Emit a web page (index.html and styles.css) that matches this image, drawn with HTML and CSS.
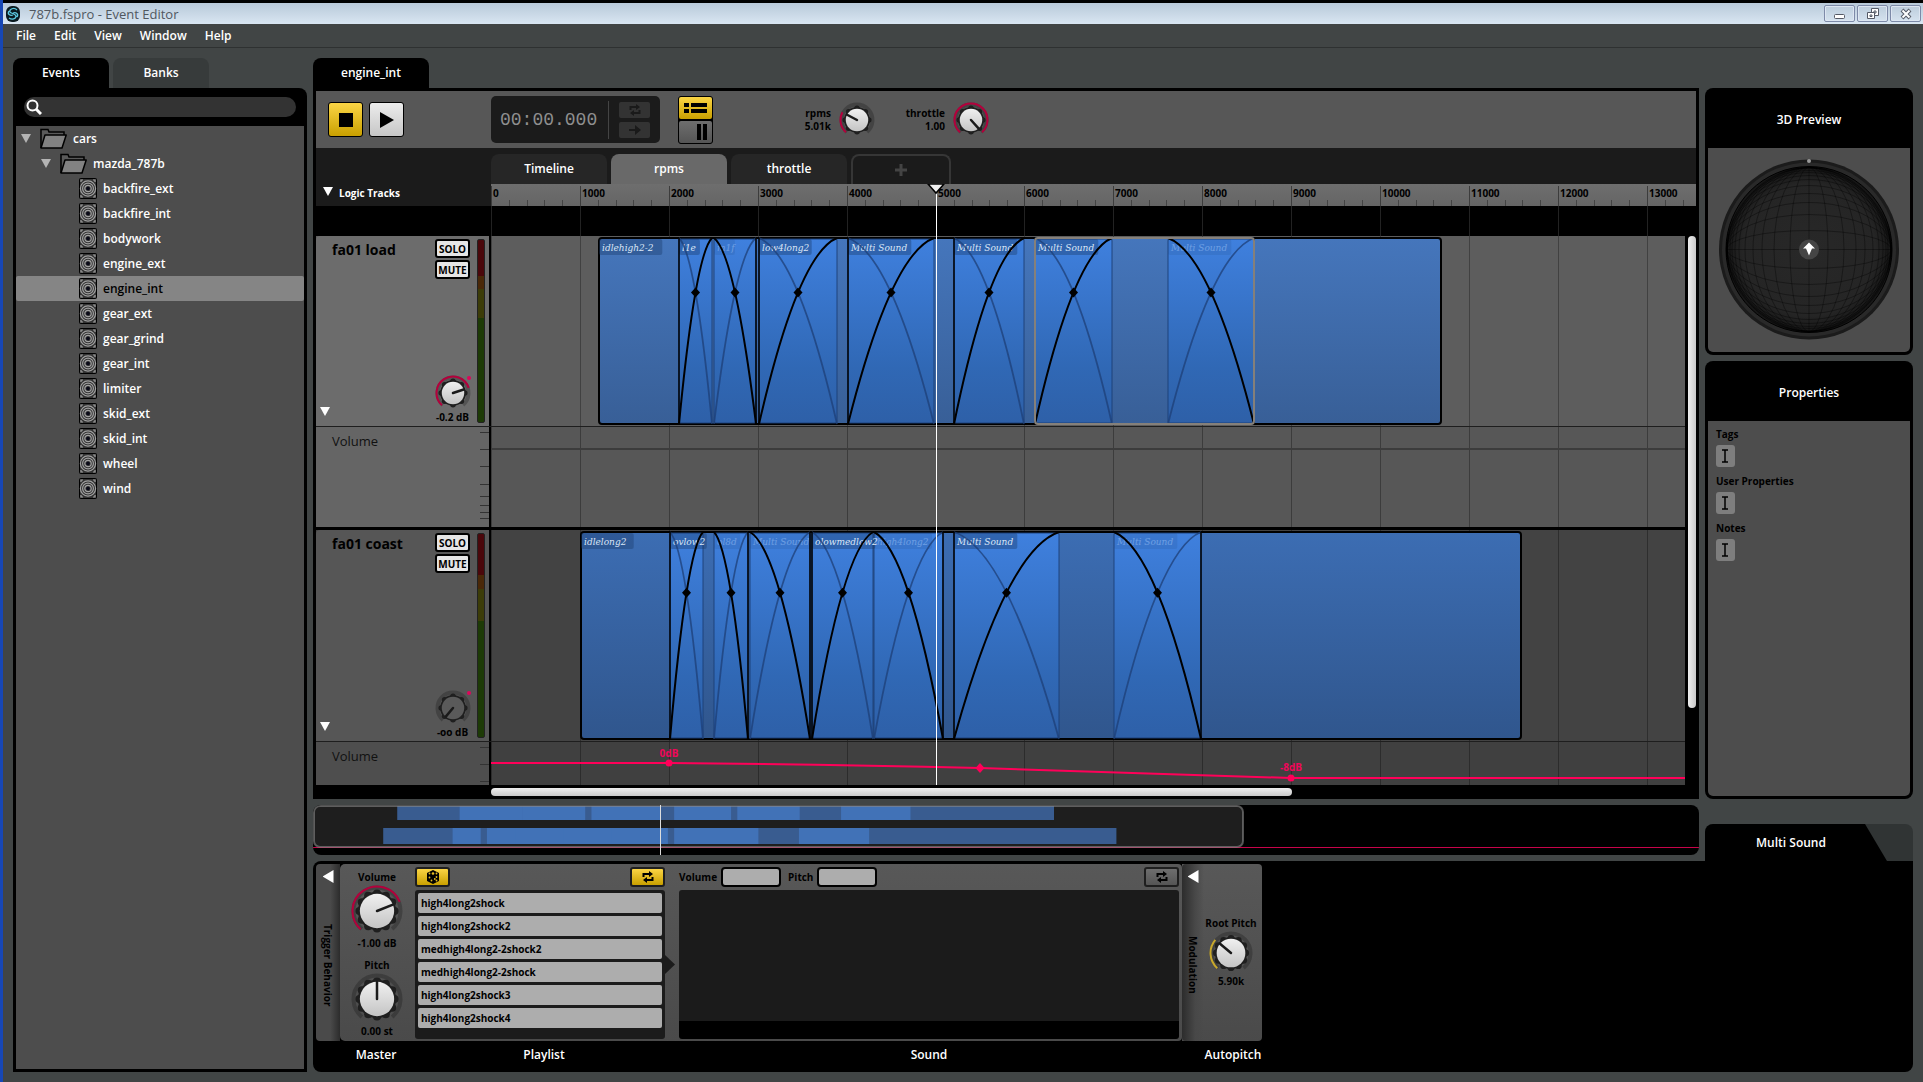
FILE: index.html
```html
<!DOCTYPE html>
<html lang="en">
<head>
<meta charset="UTF-8">
<meta name="viewport" content="width=device-width, initial-scale=1.0">
<title>787b.fspro - Event Editor</title>
<link rel="stylesheet" href="styles.css">
</head>
<body>
<svg class="defs" aria-hidden="true">
  <defs>
    <linearGradient id="faceFill" x1="0" y1="0" x2="0" y2="1">
      <stop offset="0" stop-color="#f0f0f0"/><stop offset="1" stop-color="#c4c4c4"/>
    </linearGradient>
    <linearGradient id="baseFill" x1="0" y1="0" x2="0" y2="1">
      <stop offset="0" stop-color="#4576bc"/><stop offset="1" stop-color="#385f97"/>
    </linearGradient>
    <linearGradient id="baseFillDark" x1="0" y1="0" x2="0" y2="1">
      <stop offset="0" stop-color="#3c6db3"/><stop offset="1" stop-color="#30568d"/>
    </linearGradient>
    <linearGradient id="fadeFill" x1="0" y1="0" x2="0" y2="1">
      <stop offset="0" stop-color="#3f80de"/><stop offset="0.7" stop-color="#3068b5"/><stop offset="1" stop-color="#2e60a8"/>
    </linearGradient>
    <radialGradient id="ballFill">
      <stop offset="0" stop-color="#282828"/><stop offset="0.8" stop-color="#252525"/><stop offset="1" stop-color="#161616"/>
    </radialGradient>
  </defs>
  <symbol id="folder" viewBox="0 0 27 21">
    <path d="M1 20V1.500H8L9 4H24V8" fill="#5a5a5a" stroke="#000" stroke-width="1.500"/>
    <path d="M1 20L5 7H26.200L22 20Z" fill="#828282" stroke="#000" stroke-width="1.500" stroke-linejoin="round"/>
  </symbol>
  <symbol id="event" viewBox="0 0 18 21">
    <rect x="0.500" y="0.500" width="17" height="20" rx="1" fill="#333" stroke="#000"/>
    <g fill="none" stroke="#a0a0a0" stroke-width="1.200">
      <circle cx="9" cy="10.500" r="7.600"/><circle cx="9" cy="10.500" r="5.400"/><circle cx="9" cy="10.500" r="3.200"/>
      <path d="M2 4V2H4M14 2H16V4M2 17V19H4M14 19H16V17"/>
    </g>
    <circle cx="9" cy="10.500" r="1.800" fill="#0a0a18"/>
  </symbol>
  <symbol id="loop" viewBox="0 0 14 12">
    <path d="M2.500 6V3H9M11.500 6V9H5" fill="none" stroke="currentColor" stroke-width="2"/>
    <path d="M8 0L12 3L8 6ZM6 6L2 9L6 12Z" fill="currentColor"/>
  </symbol>
</svg>

<header class="titlebar">
  <svg class="app-icon" width="14" height="16" viewBox="0 0 14 16">
    <rect width="14" height="16" rx="6" fill="#0a1a20"/>
    <path d="M11 4C8 1 3 3 4 6C5 8 9 7 10 10C10 13 6 14 3 12M3 5C1 8 4 10 7 9M11 11C13 8 10 6 7 7" fill="none" stroke="#5cc9e0" stroke-width="1.300"/>
  </svg>
  <h1>787b.fspro - Event Editor</h1>
  <div class="window-buttons">
    <button aria-label="Minimize"><svg width="12" height="12"><rect x="0.500" y="6.500" width="10" height="4" rx="1" fill="#fff" stroke="#555a66"/></svg></button>
    <button aria-label="Restore"><svg width="12" height="12"><path d="M4.500 0.500H11.500V7.500H4.500ZM7 3H9V5H7Z" fill="#fff" stroke="#555a66"/><path d="M0.500 4.500H7.500V10.500H0.500ZM3 7H5V8.500H3Z" fill="#fff" stroke="#555a66"/></svg></button>
    <button aria-label="Close"><svg width="12" height="12"><path d="M2 2L10 10M10 2L2 10" stroke="#555a66" stroke-width="4"/><path d="M2.500 2.500L9.500 9.500M9.500 2.500L2.500 9.500" stroke="#fff" stroke-width="2"/></svg></button>
  </div>
</header>

<nav class="menu">
  <a href="#">File</a>
  <a href="#">Edit</a>
  <a href="#">View</a>
  <a href="#">Window</a>
  <a href="#">Help</a>
</nav>

<main class="workspace">
  <aside class="browser">
    <div class="tabs">
      <button class="tab active">Events</button>
      <button class="tab">Banks</button>
    </div>
    <div class="browser-body">
      <label class="search">
        <svg width="16" height="16" viewBox="0 0 16 16"><circle cx="6.500" cy="6.500" r="5" fill="none" stroke="#fff" stroke-width="2"/><path d="M10 10L15 15" stroke="#fff" stroke-width="3"/></svg>
        <input type="text" aria-label="Search events">
      </label>
      <ul class="tree">
        <li class="level-0"><span class="arrow"></span><svg width="27" height="21"><use href="#folder"/></svg>cars</li>
        <li class="level-1"><span class="arrow"></span><svg width="27" height="21"><use href="#folder"/></svg>mazda_787b</li>
        <li class="level-2"><svg width="18" height="21"><use href="#event"/></svg>backfire_ext</li>
        <li class="level-2"><svg width="18" height="21"><use href="#event"/></svg>backfire_int</li>
        <li class="level-2"><svg width="18" height="21"><use href="#event"/></svg>bodywork</li>
        <li class="level-2"><svg width="18" height="21"><use href="#event"/></svg>engine_ext</li>
        <li class="level-2 selected"><svg width="18" height="21"><use href="#event"/></svg>engine_int</li>
        <li class="level-2"><svg width="18" height="21"><use href="#event"/></svg>gear_ext</li>
        <li class="level-2"><svg width="18" height="21"><use href="#event"/></svg>gear_grind</li>
        <li class="level-2"><svg width="18" height="21"><use href="#event"/></svg>gear_int</li>
        <li class="level-2"><svg width="18" height="21"><use href="#event"/></svg>limiter</li>
        <li class="level-2"><svg width="18" height="21"><use href="#event"/></svg>skid_ext</li>
        <li class="level-2"><svg width="18" height="21"><use href="#event"/></svg>skid_int</li>
        <li class="level-2"><svg width="18" height="21"><use href="#event"/></svg>wheel</li>
        <li class="level-2"><svg width="18" height="21"><use href="#event"/></svg>wind</li>
      </ul>
    </div>
  </aside>

  <section class="editor">
    <div class="tabs">
      <button class="tab wide active">engine_int</button>
    </div>
    <div class="editor-body">
      <div class="toolbar">
        <div class="transport">
          <button class="square yellow" aria-label="Stop"><svg width="14" height="14"><rect width="14" height="14"/></svg></button>
          <button class="square white" aria-label="Play"><svg width="14" height="16"><path d="M0 0L14 8L0 16Z"/></svg></button>
        </div>
        <div class="clock">
          <output>00:00.000</output>
          <div class="clock-buttons">
            <button aria-label="Loop"><svg width="14" height="12"><use href="#loop"/></svg></button>
            <button aria-label="Follow"><svg width="14" height="12"><path d="M1 6H8" stroke="currentColor" stroke-width="2"/><path d="M7 1L13 6L7 11Z" fill="currentColor"/></svg></button>
          </div>
        </div>
        <div class="view-buttons">
          <button class="yellow" aria-label="Track view"><svg width="24" height="12"><path d="M0 3H5M7 3H23M0 9H5M7 9H23" stroke="#000" stroke-width="4"/></svg></button>
          <button class="grey" aria-label="Mixer view"><svg width="10" height="16"><path d="M2 0V16M8 0V16" stroke="#000" stroke-width="4"/></svg></button>
        </div>
        <label class="param"><span>rpms<br>5.01k</span><span class="knob" data-size="36" data-angle="-62" data-color="#b4003c"></span></label>
        <label class="param"><span>throttle<br>1.00</span><span class="knob" data-size="36" data-angle="138" data-color="#b4003c"></span></label>
      </div>

      <div class="timeline-head">
        <div class="logic"><span class="arrow light"></span>Logic Tracks</div>
        <div class="timeline-top">
          <div class="sheet-tabs">
            <button>Timeline</button>
            <button class="active">rpms</button>
            <button>throttle</button>
            <button class="add" aria-label="Add sheet"><svg width="12" height="12"><path d="M6 0V12M0 6H12" stroke="#444" stroke-width="3"/></svg></button>
          </div>
          <svg class="ruler" id="ruler"></svg>
        </div>
      </div>
      <div class="logic-lane"><svg class="grid" data-stroke="#222"></svg></div>

      <div class="scroll-area">
        <div class="tracks">
          <div class="track load">
            <div class="track-head">
              <h2>fa01 load</h2>
              <div class="track-buttons"><button>SOLO</button><button>MUTE</button></div>
              <div class="meter"></div>
              <span class="arrow light"></span>
              <label class="track-knob"><span class="knob mod" data-size="36" data-angle="72" data-color="#b4003c"></span>-0.2 dB</label>
            </div>
            <svg class="lane" id="load"></svg>
          </div>
          <div class="automation load">
            <div class="auto-head">Volume<svg class="scale" data-ticks="5,22,39,57,69,78,85,91,96"></svg></div>
            <svg class="lane" id="loadVolume"></svg>
          </div>
          <div class="track coast">
            <div class="track-head">
              <h2>fa01 coast</h2>
              <div class="track-buttons"><button>SOLO</button><button>MUTE</button></div>
              <div class="meter"></div>
              <span class="arrow light"></span>
              <label class="track-knob"><span class="knob mod off" data-size="36" data-angle="-140"></span>-oo dB</label>
            </div>
            <svg class="lane" id="coast"></svg>
          </div>
          <div class="automation coast">
            <div class="auto-head">Volume<svg class="scale" data-ticks="5,22,39"></svg></div>
            <svg class="lane" id="coastVolume"></svg>
          </div>
        </div>
        <div class="vscroll"><div class="thumb"></div></div>
      </div>
      <div class="hscroll"><div class="thumb"></div></div>
      <svg class="playhead" width="18" height="601"><path d="M9.500 6V601" stroke="#fff"/><path d="M1 0H17L9 9Z" fill="#eee" stroke="#000" stroke-width="1.500"/></svg>
    </div>
  </section>

  <svg class="overview" id="overview"></svg>

  <aside class="side">
    <section class="panel">
      <h2>3D Preview</h2>
      <div class="preview"><svg id="ball" width="180" height="181" viewBox="-90 -90.500 180 181"></svg></div>
    </section>
    <section class="panel properties">
      <h2>Properties</h2>
      <form>
        <label for="tags">Tags</label>
        <div class="field"><svg width="8" height="14"><path d="M1 1H7M1 13H7M4 1V13" stroke="#000" stroke-width="1.500"/></svg><input id="tags" type="text"></div>
        <label for="user">User Properties</label>
        <div class="field"><svg width="8" height="14"><path d="M1 1H7M1 13H7M4 1V13" stroke="#000" stroke-width="1.500"/></svg><input id="user" type="text"></div>
        <label for="notes">Notes</label>
        <div class="field"><svg width="8" height="14"><path d="M1 1H7M1 13H7M4 1V13" stroke="#000" stroke-width="1.500"/></svg><input id="notes" type="text"></div>
      </form>
    </section>
  </aside>

  <div class="deck-tab"><h2>Multi Sound</h2></div>

  <section class="deck">
    <div class="module trigger">
      <div class="module-body strip"><span class="arrow left"></span><span class="vertical">Trigger Behavior</span></div>
    </div>
    <div class="module master">
      <div class="module-body">
        <label class="dial">Volume<span class="knob" data-size="52" data-angle="68" data-color="#b4003c"></span>-1.00 dB</label>
        <label class="dial">Pitch<span class="knob" data-size="52" data-angle="0"></span>0.00 st</label>
      </div>
      <h3>Master</h3>
    </div>
    <div class="module playlist">
      <div class="module-body">
        <div class="module-bar">
          <button class="yellow" aria-label="Randomize"><svg width="14" height="14" viewBox="0 0 14 14"><path d="M7 0L13 3V11L7 14L1 11V3Z"/><g fill="#e5bb20"><circle cx="7" cy="3.500" r="1.300"/><circle cx="3.500" cy="3.500" r="0.900"/><circle cx="10.500" cy="3.500" r="0.900"/><circle cx="3.500" cy="7.500" r="0.900"/><circle cx="5.500" cy="10.500" r="0.900"/><circle cx="10.500" cy="7" r="0.900"/><circle cx="8.800" cy="9" r="0.900"/><circle cx="10.500" cy="10.500" r="0.900"/></g></svg></button>
          <button class="yellow" aria-label="Loop playlist"><svg width="14" height="12"><use href="#loop"/></svg></button>
        </div>
        <ul>
          <li>high4long2shock</li>
          <li>high4long2shock2</li>
          <li>medhigh4long2-2shock2</li>
          <li>medhigh4long2-2shock</li>
          <li>high4long2shock3</li>
          <li>high4long2shock4</li>
        </ul>
      </div>
      <h3>Playlist</h3>
    </div>
    <div class="module sound">
      <div class="module-body">
        <div class="module-bar">
          <label>Volume <input type="text"></label>
          <label>Pitch <input type="text"></label>
          <button class="grey" aria-label="Loop sound"><svg width="14" height="12"><use href="#loop"/></svg></button>
        </div>
        <div class="waveform"></div>
      </div>
      <h3>Sound</h3>
    </div>
    <div class="module autopitch">
      <div class="module-body">
        <div class="strip"><span class="arrow left"></span><span class="vertical">Modulation</span></div>
        <label class="dial">Root Pitch<span class="knob" data-size="44" data-angle="-50" data-color="#c8a82c"></span>5.90k</label>
      </div>
      <h3>Autopitch</h3>
    </div>
  </section>
</main>
<script src="script.js"></script>
</body>
</html>
```
FILE: styles.css
```css
* {
  box-sizing: border-box;
}
body {
  margin: 0;
  min-height: 100vh;
  display: flex;
  flex-direction: column;
  background: #414545;
  border-left: 3px solid #1747b5;
  color: #fff;
  font-family: "Open Sans", "Noto Sans", sans-serif;
  font-size: 12px;
  font-weight: 600;
  line-height: 16px;
}
h1, h2, h3, ul {
  margin: 0;
  padding: 0;
  font-size: 12px;
  font-weight: 600;
  list-style: none;
}
button, input {
  font: inherit;
  color: inherit;
  border: 0;
  padding: 0;
  margin: 0;
  background: none;
}
button {
  display: flex;
  align-items: center;
  justify-content: center;
}
svg {
  display: block;
  flex: none;
}
.defs {
  position: absolute;
  width: 0;
  height: 0;
}

/* window frame */
.titlebar {
  display: flex;
  align-items: center;
  height: 24px;
  padding: 0 2px 0 3px;
  gap: 9px;
  border-top: 3px solid #000;
  background: linear-gradient(#b8c9d9, #d9e6f2);
}
.titlebar h1 {
  color: #50575f;
  font-size: 13px;
  font-weight: 400;
}
.window-buttons {
  display: flex;
  gap: 2px;
  margin-left: auto;
}
.window-buttons button {
  width: 31px;
  height: 17px;
  border: 1px solid #7d8aa8;
  border-radius: 2px;
  box-shadow: inset 0 0 0 1px #dde6f2;
}
.menu {
  display: flex;
  align-items: center;
  gap: 18px;
  height: 24px;
  padding-left: 13px;
  border-bottom: 1px solid #2e3131;
}
.menu a {
  color: #fff;
  text-decoration: none;
}
.workspace {
  flex: 1;
  display: grid;
  grid-template-columns: 294px minmax(0, 1fr) 208px;
  grid-template-rows: 1fr 50px 211px;
  gap: 6px;
  padding: 10px;
}

/* tabs */
.tabs {
  display: flex;
  gap: 4px;
  height: 30px;
}
.tab {
  width: 96px;
  border-radius: 8px 8px 0 0;
  background: #373b3b;
}
.tab.active {
  background: #000;
}
.tab.wide {
  width: 116px;
}

/* arrows */
.arrow {
  width: 10px;
  height: 9px;
  background: #b4b4b4;
  clip-path: polygon(0 0, 100% 0, 50% 100%);
}
.arrow.light {
  background: #fff;
}
.arrow.left {
  width: 11px;
  height: 13px;
  background: #fff;
  clip-path: polygon(100% 0, 100% 100%, 0 50%);
}

/* event browser */
.browser {
  grid-row: 1 / 4;
  display: flex;
  flex-direction: column;
}
.browser-body {
  flex: 1;
  display: flex;
  flex-direction: column;
  padding: 0 3px 3px;
  background: #000;
  border-radius: 0 8px 0 0;
}
.search {
  display: flex;
  align-items: center;
  gap: 6px;
  height: 20px;
  margin: 9px 8px;
  padding-left: 2px;
  border-radius: 10px;
  background: #333;
}
.search input {
  flex: 1;
  outline: 0;
}
.tree {
  flex: 1;
  background: #4d4d4d;
}
.tree li {
  display: flex;
  align-items: center;
  gap: 6px;
  height: 25px;
  border-radius: 2px;
}
.tree .arrow {
  margin-right: 3px;
}
.level-0 {
  padding-left: 5px;
}
.level-1 {
  padding-left: 25px;
}
.level-2 {
  padding-left: 63px;
}
.tree .selected {
  background: #858585;
  color: #000;
}

/* editor */
.editor {
  display: flex;
  flex-direction: column;
}
.editor-body {
  position: relative;
  flex: 1;
  display: flex;
  flex-direction: column;
  padding: 3px 3px 0;
  background: #000;
}
.toolbar {
  display: flex;
  align-items: center;
  height: 57px;
  padding-left: 12px;
  background: #575757;
}
.transport {
  display: flex;
  gap: 6px;
  width: 163px;
}
.square {
  width: 35px;
  height: 35px;
  border: 1px solid #000;
  border-radius: 3px;
}
.yellow {
  background: linear-gradient(#fbd545, #c9a000);
  color: #000;
}
.white {
  background: linear-gradient(#ececec, #c6c6c6);
}
.grey {
  background: linear-gradient(#6e6e6e, #555);
  color: #000;
}
.clock {
  display: flex;
  align-items: center;
  width: 169px;
  height: 47px;
  padding-left: 9px;
  border-radius: 5px;
  background: #1b1b1b;
}
.clock output {
  width: 108px;
  color: #8f8f8f;
  font: 18px/38px "Liberation Mono", monospace;
}
.clock-buttons {
  display: grid;
  gap: 4px;
  padding: 1px 0 1px 10px;
  border-left: 1px solid #444;
}
.clock-buttons button {
  width: 31px;
  height: 16px;
  border-radius: 2px;
  background: #333;
  color: #1a1a1a;
}
.view-buttons {
  width: 35px;
  margin: 0 87px 0 18px;
  border: 1px solid #000;
  border-radius: 3px;
  background: #000;
}
.view-buttons button {
  width: 33px;
  height: 22px;
  border-radius: 2px;
}
.view-buttons button + button {
  margin-top: 2px;
  padding-left: 12px;
}
.param {
  display: flex;
  align-items: center;
  justify-content: flex-end;
  gap: 8px;
  width: 75px;
  color: #000;
  font-size: 10px;
  font-weight: 700;
  line-height: 13px;
  text-align: right;
}
.param + .param {
  width: 114px;
}

/* knobs */
.knob {
  position: relative;
  display: block;
}
.knob input {
  position: absolute;
  inset: 0;
  width: 100%;
  height: 100%;
  opacity: 0;
}

/* sheet tabs and ruler */
.timeline-head {
  display: flex;
  height: 58px;
  background: #1b1b1b;
}
.logic {
  display: flex;
  align-items: flex-end;
  gap: 6px;
  width: 175px;
  padding: 0 0 5px 7px;
  font-size: 10px;
  font-weight: 700;
}
.logic .arrow {
  margin-bottom: 5px;
}
.timeline-top {
  flex: 1;
  padding-top: 6px;
}
.sheet-tabs {
  display: flex;
  gap: 4px;
  height: 30px;
}
.sheet-tabs button {
  width: 116px;
  border-radius: 8px 8px 0 0;
  background: #262626;
}
.sheet-tabs .active {
  background: #696969;
}
.sheet-tabs .add {
  width: 100px;
  border: 2px solid #363636;
  border-bottom: 0;
  background: none;
}
.ruler {
  width: 100%;
  height: 22px;
  background: linear-gradient(#6e6e6e, #656565);
  font-size: 10px;
  font-weight: 700;
}
.logic-lane {
  height: 30px;
  padding-left: 175px;
}
.grid {
  width: 100%;
  height: 100%;
}

/* tracks */
.scroll-area {
  flex: 1;
  display: flex;
  gap: 3px;
}
.tracks {
  flex: 1;
  display: flex;
  flex-direction: column;
  overflow: hidden;
}
.track, .automation {
  display: flex;
  border-bottom: 1px solid #1e1e1e;
}
.track.load {
  height: 191px;
  background: #5d5d5d;
}
.track.coast {
  height: 212px;
  background: #434343;
}
.automation.load {
  height: 103px;
  border-bottom: 3px solid #000;
  background: #575757;
}
.automation.coast {
  flex: 1;
  border: 0;
  background: #404040;
}
.lane {
  flex: 1;
  width: 0;
  height: 100%;
}
.automation.coast .lane, .automation.coast .scale {
  height: 43px;
}
.track-head {
  display: grid;
  grid-template-columns: 1fr 35px 8px;
  grid-template-rows: auto 1fr;
  column-gap: 7px;
  width: 175px;
  padding: 3px 4px 3px 3px;
  border-right: 2px solid #000;
  border-radius: 4px 0 0 0;
  background: #6c6c6c;
  color: #000;
}
.coast .track-head {
  background: #565656;
}
.track-head h2 {
  padding-left: 13px;
  font-size: 14px;
  font-weight: 700;
  line-height: 22px;
}
.track-buttons button {
  width: 35px;
  height: 19px;
  margin-bottom: 2px;
  border: 2px solid #000;
  border-radius: 3px;
  background: #e6e6e6;
  font-size: 10px;
  font-weight: 700;
}
.meter {
  grid-row: 1 / 3;
  grid-column: 3;
  border: 1px solid #222;
  border-radius: 2px;
  background: linear-gradient(#4a070b 0 20%, #4a2808 20% 27%, #3c3c08 27% 43%, #1d3a06 43%);
}
.track-head .arrow {
  grid-row: 2;
  grid-column: 1;
  align-self: end;
  margin: 0 0 7px 1px;
}
.track-knob {
  grid-row: 2;
  grid-column: 2;
  align-self: end;
  justify-self: center;
  font-size: 10px;
  font-weight: 700;
  line-height: 12px;
  text-align: center;
  white-space: nowrap;
}
.auto-head {
  display: flex;
  justify-content: space-between;
  width: 175px;
  padding: 6px 0 0 16px;
  border-right: 2px solid #000;
  background: #656565;
  color: #111;
  font-size: 13px;
  font-weight: 400;
}
.coast .auto-head {
  background: #4e4e4e;
}
.scale {
  width: 9px;
  height: 100%;
  margin-top: -6px;
}
.clip-label {
  font: italic 10px "DejaVu Serif Condensed", "DejaVu Serif", serif;
}
.db-label {
  font-size: 10px;
  font-weight: 700;
  fill: #f0055a;
  text-anchor: middle;
}
.thumb {
  border-radius: 4px;
  background: #dcdcdc;
}
.vscroll {
  width: 8px;
}
.vscroll .thumb {
  height: 86%;
  background: linear-gradient(90deg, #eee, #c8c8c8);
}
.hscroll {
  height: 14px;
  padding: 3px 9px 3px 175px;
}
.hscroll .thumb {
  width: 67%;
  height: 8px;
  background: linear-gradient(#eee, #c8c8c8);
}
.playhead {
  position: absolute;
  left: 614px;
  top: 96px;
}

.overview {
  grid-column: 2;
  grid-row: 2;
  width: 100%;
  height: 50px;
  border-radius: 8px;
  background: #000;
}

/* right column */
.side {
  grid-column: 3;
  grid-row: 1;
  display: flex;
  flex-direction: column;
  gap: 6px;
  padding-top: 30px;
}
.panel {
  padding: 0 3px 3px;
  border-radius: 8px;
  background: #000;
}
.panel h2 {
  padding-top: 4px;
  line-height: 56px;
  text-align: center;
}
.preview {
  display: flex;
  justify-content: center;
  height: 204px;
  padding-top: 11px;
  border-radius: 0 0 5px 5px;
  background: #4d4d4d;
}
.properties {
  flex: 1;
  display: flex;
  flex-direction: column;
}
.properties form {
  flex: 1;
  padding: 5px 8px;
  border-radius: 0 0 5px 5px;
  background: #4d4d4d;
  color: #000;
  font-size: 10px;
  font-weight: 700;
}
.properties label {
  display: block;
}
.field {
  display: flex;
  align-items: center;
  width: 19px;
  height: 22px;
  margin: 3px 0 6px;
  padding-left: 5px;
  border-radius: 3px;
  background: #7e7e7e;
}
.field input {
  width: 0;
}

/* deck */
.deck-tab {
  grid-column: 3;
  grid-row: 2;
  align-self: end;
  height: 37px;
  margin-bottom: -6px;
  border-radius: 8px 8px 0 0;
  background: #303434;
  overflow: hidden;
}
.deck-tab h2 {
  width: 182px;
  padding-right: 10px;
  background: #000;
  clip-path: polygon(0 0, 160px 0, 100% 100%, 0 100%);
  line-height: 37px;
  text-align: center;
}
.deck {
  grid-column: 2 / 4;
  grid-row: 3;
  display: flex;
  padding: 3px;
  border-radius: 8px 0 8px 8px;
  background: #000;
}
.module {
  display: flex;
  flex-direction: column;
}
.module h3 {
  line-height: 28px;
  text-align: center;
}
.module-body {
  height: 177px;
  padding-top: 3px;
  background: linear-gradient(#585858, #4a4a4a);
  color: #000;
  font-size: 10px;
  font-weight: 700;
}
.strip {
  display: flex;
  flex-direction: column;
  align-items: center;
  width: 24px;
  padding-top: 6px;
  background: linear-gradient(90deg, #4a4a4a 60%, #2c2c2c);
  border-radius: 4px 0 0 4px;
}
.vertical {
  margin: auto;
  writing-mode: vertical-rl;
}
.trigger .vertical {
  margin-top: 41px;
}
.master {
  width: 72px;
}
.master .module-body {
  border-radius: 5px 0 0 5px;
}
.dial {
  display: flex;
  flex-direction: column;
  align-items: center;
  height: 88px;
  padding: 2px 0 0 2px;
  line-height: 16px;
}
.dial .knob {
  margin-bottom: -2px;
}
.playlist {
  width: 264px;
}
.playlist .module-body {
  padding-left: 3px;
}
.module-bar {
  display: flex;
  align-items: center;
  justify-content: space-between;
  height: 20px;
  margin-bottom: 3px;
}
.module-bar button {
  width: 35px;
  height: 20px;
  border: 2px solid #1e1e1e;
  border-radius: 3px;
}
.playlist .module-bar, .playlist ul {
  width: 250px;
}
.playlist ul {
  position: relative;
  height: 149px;
  padding: 3px;
  border-radius: 3px;
  background: #1b1b1b;
}
.playlist ul::after {
  content: "";
  position: absolute;
  left: 100%;
  top: 65px;
  width: 10px;
  height: 19px;
  background: #1b1b1b;
  clip-path: polygon(0 0, 100% 50%, 0 100%);
}
.playlist li {
  height: 20px;
  margin-bottom: 3px;
  padding-left: 3px;
  border-radius: 2px;
  background: #adadad;
  font-size: 10px;
  font-weight: 700;
  line-height: 21px;
}
.sound {
  width: 506px;
}
.sound .module-body {
  padding-left: 3px;
  padding-right: 3px;
  border-radius: 0 4px 4px 0;
}
.sound .module-bar {
  justify-content: flex-start;
  gap: 7px;
}
.module-bar label {
  display: flex;
  align-items: center;
  gap: 4px;
}
.module-bar input {
  width: 60px;
  height: 20px;
  border: 2px solid #000;
  border-radius: 4px;
  background: #adadad;
}
.module-bar label ~ button {
  margin-left: auto;
}
.waveform {
  height: 149px;
  border-bottom: 18px solid #000;
  border-radius: 3px;
  background: #1b1b1b;
}
.autopitch {
  width: 80px;
}
.autopitch .module-body {
  display: flex;
  padding: 0;
  border-radius: 0 4px 4px 0;
}
.autopitch .strip {
  width: 22px;
  padding-top: 6px;
  background: linear-gradient(90deg, #2c2c2c, #484848 60%, transparent);
}
.autopitch .vertical {
  margin: 53px 0 0;
}
.autopitch .dial {
  flex: 1;
  padding: 51px 4px 0 0;
  white-space: nowrap;
}
.autopitch h3 {
  padding-left: 22px;
}
```
FILE: script.js
```js
// horizontal zoom: pixels for one unit of 1000 rpm
const STEP = 88.9;

// fades: [start, end, direction, label], positions in px from the lane start
const tracks = {
  load: {
    height: 190, start: 108, end: 950, label: 'idlehigh2-2', fill: 'baseFill',
    selected: [544, 763],
    fades: [
      [188, 221, 'in', 'l1e'], [223, 265, 'out', 'm1f'], [268, 346, 'in', 'low4long2'],
      [357, 443, 'in', 'Multi Sound'], [463, 533, 'in', 'Multi Sound'],
      [544, 621, 'in', 'Multi Sound'], [677, 763, 'out', 'Multi Sound']
    ]
  },
  coast: {
    height: 211, start: 90, end: 1030, label: 'idlelong2', fill: 'baseFillDark',
    fades: [
      [179, 212, 'in', 'ovlow2'], [223, 257, 'out', 'ol8d'], [259, 319, 'out', 'Multi Sound'],
      [321, 382, 'in', 'olowmedlow2'], [383, 452, 'out', 'high4long2'],
      [463, 568, 'in', 'Multi Sound'], [623, 710, 'out', 'Multi Sound']
    ]
  }
};

// number of 1000 rpm steps that start inside the ruler
const steps = Math.ceil((document.getElementById('ruler').clientWidth - 40) / STEP);

function gridLines(height, stroke) {
  let out = '';
  for (let i = 0; i < steps; i++) {
    out += `<path d="M${Math.round(i * STEP) + 0.5} 0V${height}" stroke="${stroke}"/>`;
  }
  return out;
}

function clipLabel(x, text, faint) {
  const width = text.length * 5.3 + 5;
  return `<g opacity="${faint ? 0.3 : 1}">
    <rect x="${x}" y="3" width="${width}" height="16" rx="2" fill="#1c3c6c" fill-opacity="0.4"/>
    <text class="clip-label" x="${x + 3}" y="15" fill="#dbe6f6">${text}</text></g>`;
}

function drawTrack(id) {
  const t = tracks[id];
  const top = 2, bottom = t.height - 2, h = bottom - top;
  const mid = top + h * 0.293, ctl = top + h * 0.086;
  let out = gridLines(t.height, 'rgba(0,0,0,.3)');
  out += `<rect x="${t.start}" y="${top}" width="${t.end - t.start}" height="${h}" rx="3" fill="url(#${t.fill})" stroke="#000" stroke-width="2"/>`;
  out += clipLabel(t.start, t.label, false);
  t.fades.forEach(([a, b]) => {
    out += `<rect x="${a}" y="${top + 1}" width="${b - a}" height="${h - 2}" rx="2" fill="url(#fadeFill)" stroke="#1d3f77" stroke-opacity=".6" stroke-width="1.5"/>`;
  });
  // labels of clips fading out lie below the ones fading in
  ['out', 'in'].forEach(side => {
    t.fades.filter(f => f[2] === side).forEach(([a, b, dir, label]) => {
      out += clipLabel(a, label, dir === 'out');
    });
  });
  t.fades.forEach(([a, b, dir]) => {
    const c = (a + b) / 2;
    const rise = `M${a} ${bottom}Q${c} ${ctl} ${b} ${top}`;
    const fall = `M${a} ${top}Q${c} ${ctl} ${b} ${bottom}`;
    const edge = dir === 'in' ? a : b;
    out += `<path d="${dir === 'in' ? fall : rise}" fill="none" stroke="#1d3f77" stroke-opacity=".75" stroke-width="1.8"/>`;
    out += `<path d="${dir === 'in' ? rise : fall}" fill="none" stroke="#000" stroke-width="2"/>`;
    out += `<path d="M${edge} ${top}V${bottom}" stroke="#000" stroke-width="1.5"/>`;
    out += `<path d="M${c} ${mid - 5}L${c + 4.5} ${mid}L${c} ${mid + 5}L${c - 4.5} ${mid}Z" fill="#000"/>`;
  });
  if (t.selected) {
    const [a, b] = t.selected;
    out += `<rect x="${a}" y="${top}" width="${b - a}" height="${h}" rx="3" fill="none" stroke="#85807a" stroke-width="2"/>`;
  }
  document.getElementById(id).innerHTML = out;
}

function drawRuler() {
  let out = '';
  for (let i = 0; i < steps; i++) {
    const x = Math.round(i * STEP);
    out += `<path d="M${x + 0.5} 2V22" stroke="#3c3c3c"/>`;
    for (let k = 1; k < 5; k++) {
      out += `<path d="M${Math.round(x + k * STEP / 5) + 0.5} 16V22" stroke="#444"/>`;
    }
    out += `<text x="${x + 2}" y="13">${i * 1000}</text>`;
  }
  document.getElementById('ruler').innerHTML = out;
}

function drawOverview() {
  const k = 0.78;
  let out = '<rect x="1" y="1" width="929" height="41" rx="6" fill="#1e1e1e"/>';
  [['load', 1, 14], ['coast', 23, 16]].forEach(([id, y, h]) => {
    const t = tracks[id];
    out += `<rect x="${t.start * k}" y="${y}" width="${(t.end - t.start) * k}" height="${h}" fill="#395c90"/>`;
    t.fades.forEach(([a, b]) => {
      // gaps of a pixel or two close up at this scale
      out += `<rect x="${a * k}" y="${y}" width="${(b - a + 3) * k}" height="${h}" fill="#4172b7"/>`;
    });
  });
  out += '<path d="M0 42.500H3000" stroke="#c8044a"/>';
  out += '<rect x="1" y="1" width="929" height="41" rx="6" fill="none" stroke="#888" stroke-opacity=".6" stroke-width="2"/>';
  out += '<path d="M347.500 0V50" stroke="#ddd"/>';
  document.getElementById('overview').innerHTML = out;
}

function arc(r, from, to) {
  const p = d => {
    const a = d * Math.PI / 180;
    return `${(r * Math.sin(a)).toFixed(2)} ${(-r * Math.cos(a)).toFixed(2)}`;
  };
  return `M${p(from)}A${r} ${r} 0 ${to - from > 180 ? 1 : 0} 1 ${p(to)}`;
}

function drawKnob(el) {
  const size = +el.dataset.size, angle = +el.dataset.angle;
  const off = el.classList.contains('off');
  const R = size / 2 - 1.5, body = R * 0.84, face = R * (size > 40 ? 0.7 : 0.68);
  let teeth = '';
  const n = size > 40 ? 12 : 8;
  for (let i = 0; i < n; i++) {
    const a = i * 2 * Math.PI / n;
    teeth += `<circle cx="${Math.cos(a) * body * 0.85}" cy="${Math.sin(a) * body * 0.85}" r="${body * 0.2}"/>`;
  }
  let out = `<svg width="${size}" height="${size}" viewBox="${-size / 2} ${-size / 2} ${size} ${size}">`;
  out += `<path d="${arc(R - 1, -140, 140)}" fill="none" stroke="#000" stroke-opacity=".22" stroke-width="4"/>`;
  out += `<g fill="#1f1f1f"><circle r="${body * 0.93}"/>${teeth}</g>`;
  out += `<circle r="${face}" fill="${off ? '#5a5a5a' : 'url(#faceFill)'}"/>`;
  out += `<path d="M0 0V${-face}" transform="rotate(${angle})" stroke="#1a1a1a" stroke-width="2.500" stroke-linecap="round"/>`;
  if (el.dataset.color) {
    out += `<path d="${arc(R, -138, angle)}" fill="none" stroke="${el.dataset.color}" stroke-width="2"/>`;
  }
  if (el.classList.contains('mod')) {
    out += '<circle cx="16" cy="-15" r="2" fill="#e0055a"/>';
  }
  out += `</svg><input type="range" min="-140" max="140" value="${angle}">`;
  el.innerHTML = out;
}

function drawBall() {
  let out = '<circle r="90" fill="#1b1b1b"/><circle r="87" fill="#292929"/><circle r="83" fill="url(#ballFill)" stroke="#000"/>';
  out += '<g fill="none" stroke="#000" stroke-opacity=".35"><path d="M0 -82V82M-82 0H82"/>';
  [19, 35, 47, 56, 64, 70, 74, 77, 79].forEach(r => {
    out += `<ellipse rx="${r}" ry="82"/><ellipse rx="82" ry="${r}"/>`;
  });
  out += '</g><circle r="10" fill="#454545"/><path d="M0 -7L6 -1H3L0 6L-3 -1H-6Z" fill="#fff"/><circle cy="-88.500" r="2" fill="#999"/>';
  document.getElementById('ball').innerHTML = out;
}

drawTrack('load');
drawTrack('coast');
drawRuler();
drawOverview();
drawBall();

document.querySelectorAll('.knob').forEach(drawKnob);
document.querySelectorAll('.grid').forEach(el => {
  el.innerHTML = gridLines(30, el.dataset.stroke);
});
document.querySelectorAll('.scale').forEach(el => {
  el.innerHTML = el.dataset.ticks.split(',').map(y => `<path d="M0 ${+y + 0.5}H9" stroke="#333"/>`).join('');
});

document.getElementById('loadVolume').innerHTML = gridLines(100, 'rgba(0,0,0,.3)') +
  '<path d="M0 22H3000" stroke="#3c3c3c" stroke-width="2"/>';

document.getElementById('coastVolume').innerHTML = gridLines(43, 'rgba(0,0,0,.3)') +
  '<path d="M0 21H178Q330 22 489 26L800 36H3000" fill="none" stroke="#ff0059" stroke-width="2"/>' +
  '<g fill="#ff0059"><circle cx="178" cy="21" r="3.500"/><path d="M489 21L493.500 26L489 31L484.500 26Z"/><circle cx="800" cy="36" r="3.500"/></g>' +
  '<text class="db-label" x="178" y="15">0dB</text><text class="db-label" x="800" y="29">-8dB</text>';
```
